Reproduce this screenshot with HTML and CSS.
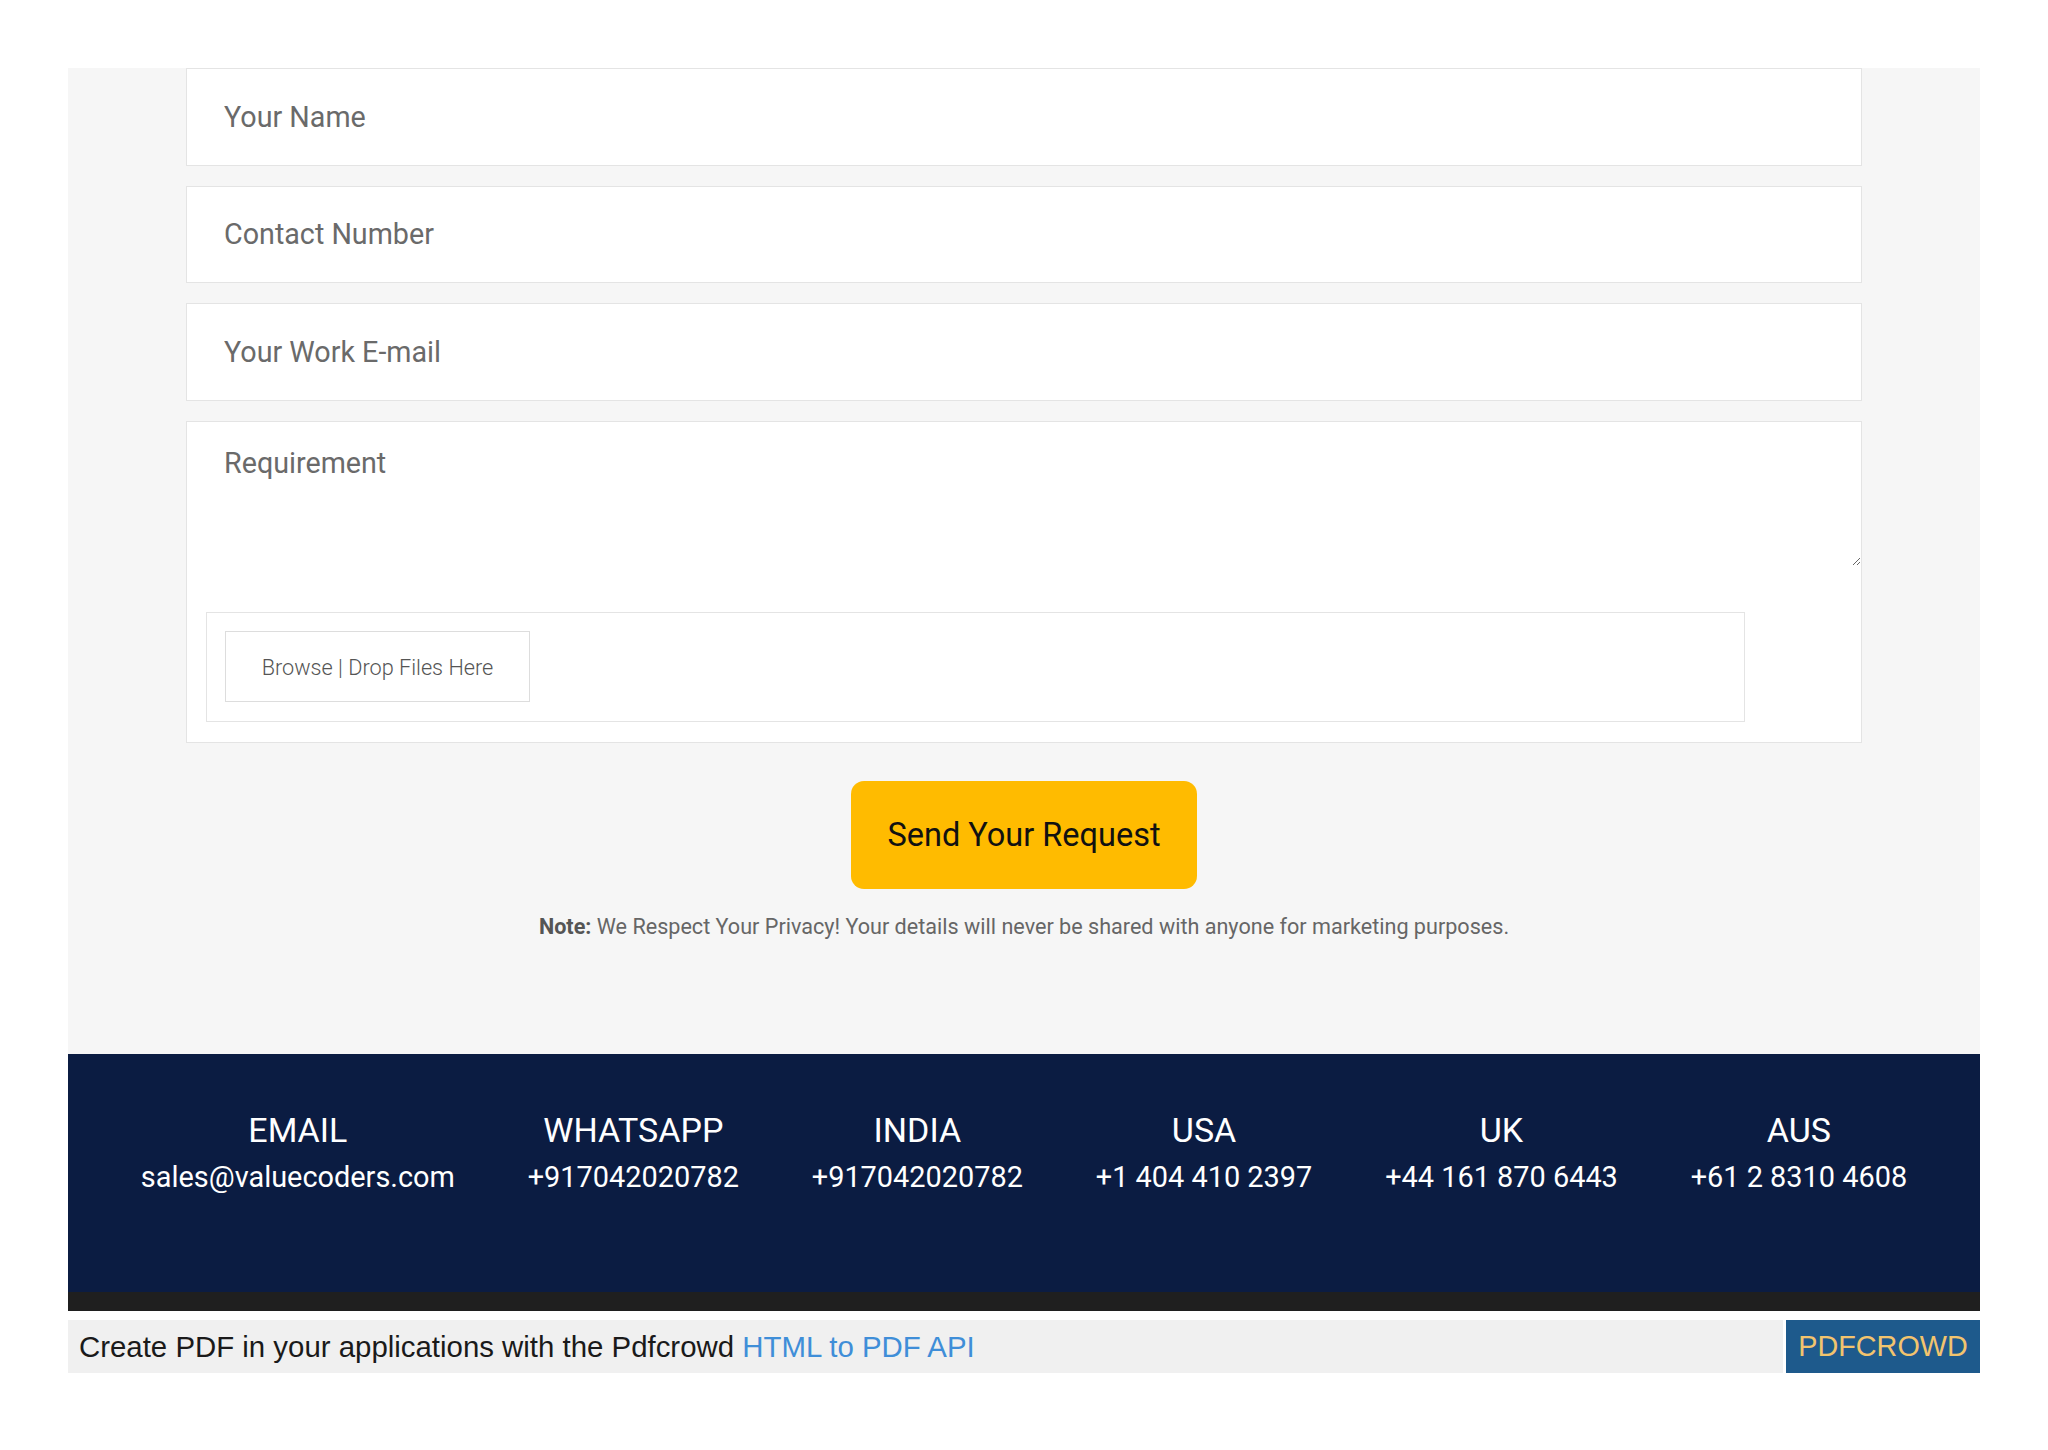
FILE: index.html
```html
<!DOCTYPE html>
<html lang="en">
<head>
<meta charset="utf-8">
<title>Contact Form</title>
<link rel="stylesheet" href="styles.css">
</head>
<body>
<div class="page">
  <section class="form-panel">
    <form class="form">
      <input class="field" type="text" placeholder="Your Name">
      <input class="field" type="text" placeholder="Contact Number">
      <input class="field" type="email" placeholder="Your Work E-mail">
      <div class="req-box">
        <textarea class="req" placeholder="Requirement"></textarea>
        <div class="drop">
          <div class="browse">Browse | Drop Files Here</div>
        </div>
      </div>
      <div class="actions">
        <button type="button" class="send">Send Your Request</button>
      </div>
      <p class="note"><b>Note:</b> We Respect Your Privacy! Your details will never be shared with anyone for marketing purposes.</p>
    </form>
  </section>
  <footer class="contact">
    <div class="item"><div class="label">EMAIL</div><div class="value">sales@valuecoders.com</div></div>
    <div class="item"><div class="label">WHATSAPP</div><div class="value">+917042020782</div></div>
    <div class="item"><div class="label">INDIA</div><div class="value">+917042020782</div></div>
    <div class="item"><div class="label">USA</div><div class="value">+1 404 410 2397</div></div>
    <div class="item"><div class="label">UK</div><div class="value">+44 161 870 6443</div></div>
    <div class="item"><div class="label">AUS</div><div class="value">+61 2 8310 4608</div></div>
  </footer>
  <div class="strip"></div>
  <div class="pdfbar">
    <div class="pdftext">Create PDF in your applications with the Pdfcrowd <a href="#" class="pdflink">HTML to PDF API</a></div>
    <div class="pdfbrand">PDFCROWD</div>
  </div>
</div>
</body>
</html>
```

FILE: styles.css
```css
html, body {
  margin: 0;
  padding: 0;
  background: #ffffff;
}
body {
  font-family: Roboto, "Liberation Sans", Arial, sans-serif;
}
.page {
  width: 1912px;
  margin: 0 auto;
  padding-top: 68px;
}
.form-panel {
  background: #f6f6f6;
  height: 986px;
  padding: 0 118px;
  box-sizing: border-box;
}
.form {
  display: flex;
  flex-direction: column;
  gap: 20px;
}
.field {
  display: block;
  height: 97.5px;
  box-sizing: border-box;
  border: 1.5px solid #e4e4e4;
  background: #fff;
  padding: 0 37px;
  font-family: Roboto, sans-serif;
  font-size: 28.7px;
  color: #555;
  outline: none;
  margin: 0;
  width: 100%;
}
.field::placeholder, .req::placeholder {
  color: #6a6a6a;
  opacity: 1;
}
.req-box {
  height: 322px;
  box-sizing: border-box;
  border: 1.5px solid #e4e4e4;
  background: #fff;
  display: flex;
  flex-direction: column;
}
.req {
  display: block;
  width: 100%;
  height: 144px;
  box-sizing: border-box;
  border: none;
  outline: none;
  resize: vertical;
  padding: 24px 37px 0;
  font-family: Roboto, sans-serif;
  font-size: 28.7px;
  color: #555;
  background: #fff;
  margin: 0;
}
.drop {
  margin: 46px 0 0 18.5px;
  width: 1539px;
  height: 110px;
  box-sizing: border-box;
  border: 1.5px solid #e4e4e4;
  padding: 18.5px;
}
.browse {
  width: 305px;
  height: 71px;
  box-sizing: border-box;
  border: 1.5px solid #dddddd;
  display: flex;
  align-items: center;
  justify-content: center;
  font-size: 21.7px;
  font-weight: 300;
  color: #555;
  padding-top: 2px;
}
.actions {
  display: flex;
  justify-content: center;
  margin-top: 18px;
}
.send {
  width: 346px;
  height: 108px;
  border: none;
  border-radius: 13px;
  background: #ffbb00;
  color: #111;
  font-family: Roboto, sans-serif;
  font-size: 32.5px;
  cursor: pointer;
}
.note {
  margin: 5px 0 0;
  text-align: center;
  font-size: 21.6px;
  color: #666;
}
.note b {
  color: #555;
}
.contact {
  background: #0b1c42;
  height: 238px;
  box-sizing: border-box;
  padding-top: 56px;
  display: flex;
  justify-content: space-evenly;
  align-items: flex-start;
  color: #fff;
}
.item {
  text-align: center;
}
.label {
  font-size: 34px;
  line-height: 40px;
  margin-bottom: 10px;
}
.value {
  font-size: 28.9px;
  line-height: 34px;
}
.strip {
  height: 19px;
  background: #1f1f1f;
}
.pdfbar {
  margin-top: 9px;
  height: 53px;
  display: flex;
  align-items: stretch;
  font-family: "Liberation Sans", Arial, sans-serif;
  font-size: 29.4px;
}
.pdftext {
  flex: 1;
  background: #f0f0f0;
  color: #1a1a1a;
  display: flex;
  align-items: center;
  padding-left: 11px;
  white-space: pre;
}
.pdflink {
  color: #3f8ed8;
  text-decoration: none;
}
.pdfbrand {
  width: 194px;
  margin-left: 3px;
  background: #1e5a8c;
  color: #f2c46e;
  font-size: 28.8px;
  display: flex;
  align-items: center;
  justify-content: center;
}
```
